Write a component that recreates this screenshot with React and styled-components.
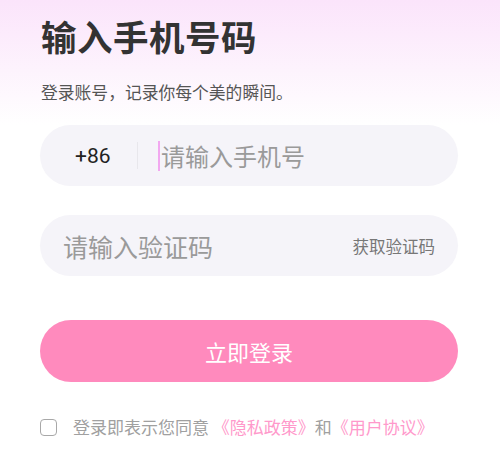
import React from "react";
import styled, { createGlobalStyle } from "styled-components";

const Global = createGlobalStyle`
  html, body { margin: 0; padding: 0; background: #fff; }
  body { font-family: "Noto Sans CJK SC", "Noto Sans", sans-serif; }
  * { box-sizing: border-box; }
`;

const Page = styled.div`
  width: 500px;
  height: 457px;
  overflow: hidden;
  background: linear-gradient(180deg, #fbe4fb 0px, #fdf3fd 70px, #ffffff 125px);
  padding: 11px 42px 0 40px;
  display: flex;
  flex-direction: column;
`;

const Title = styled.h1`
  margin: 0 0 0 1px;
  font-size: 35.5px;
  font-weight: 700;
  line-height: 50px;
  color: #333;
  letter-spacing: 0.5px;
`;

const Subtitle = styled.p`
  margin: 20px 0 0 1px;
  font-size: 16.8px;
  line-height: 22px;
  color: #555;
`;

const Field = styled.div`
  margin-top: ${(p) => p.$mt}px;
  height: 61px;
  flex-shrink: 0;
  border-radius: 31px;
  background: #f5f4f9;
  display: flex;
  align-items: center;
  padding: 0 23px 0 ${(p) => p.$pl}px;
`;

const Prefix = styled.span`
  font-family: "Roboto", "Noto Sans", sans-serif;
  font-size: 21px;
  color: #222;
  width: 62px;
`;

const Divider = styled.span`
  width: 1px;
  height: 27px;
  background: #e8e7ec;
  margin-right: 20px;
`;

const Caret = styled.span`
  width: 2px;
  height: 30px;
  background: #f2a8f0;
  margin-right: 1px;
`;

const Placeholder = styled.span`
  flex: 1;
  font-size: ${(p) => p.$size}px;
  color: #9a9a9a;
  line-height: 30px;
`;

const SendCode = styled.span`
  font-size: 16.5px;
  color: #777;
`;

const Button = styled.button`
  margin-top: 44px;
  height: 62px;
  flex-shrink: 0;
  border: none;
  border-radius: 31px;
  background: #ff8abd;
  color: #fff;
  font-family: inherit;
  font-size: 22px;
  padding: 0;
  cursor: pointer;
`;

const Agree = styled.div`
  margin-top: 33px;
  display: flex;
  align-items: center;
  font-size: 17px;
  line-height: 24px;
  color: #a0a0a0;
  white-space: pre;
`;

const Box = styled.span`
  width: 17px;
  height: 17px;
  border: 1.5px solid #a8a8a8;
  border-radius: 4px;
  margin-right: 16px;
`;

const Link = styled.span`
  color: #ff99cb;
`;

export default function App() {
  return (
    <>
      <Global />
      <Page>
        <Title>输入手机号码</Title>
        <Subtitle>登录账号，记录你每个美的瞬间。</Subtitle>
        <Field $mt={22} $pl={35}>
          <Prefix>+86</Prefix>
          <Divider />
          <Caret />
          <Placeholder $size={24}>请输入手机号</Placeholder>
        </Field>
        <Field $mt={29} $pl={23}>
          <Placeholder $size={25}>请输入验证码</Placeholder>
          <SendCode>获取验证码</SendCode>
        </Field>
        <Button>立即登录</Button>
        <Agree>
          <Box />
          登录即表示您同意 <Link>《隐私政策》</Link>和<Link>《用户协议》</Link>
        </Agree>
      </Page>
    </>
  );
}
